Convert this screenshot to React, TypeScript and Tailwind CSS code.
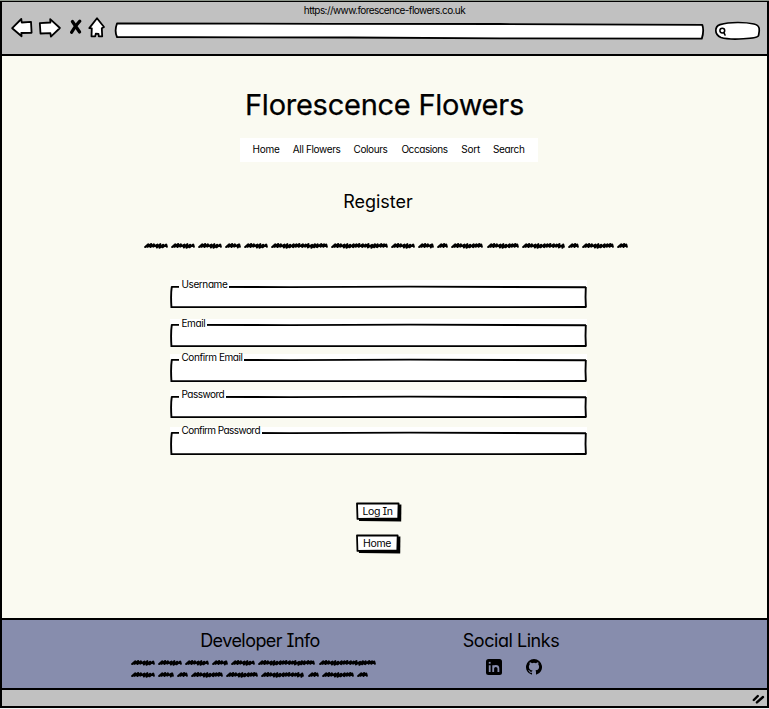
import React from "react";

const nav = [
  { label: "Home", cls: "w-[27px] tracking-[-0.25px]" },
  { label: "All Flowers", cls: "w-[47.5px] tracking-[-0.35px]" },
  { label: "Colours", cls: "w-[34.5px] tracking-[-0.4px]" },
  { label: "Occasions", cls: "w-[46.5px] tracking-[-0.42px]" },
  { label: "Sort", cls: "w-[18.5px] tracking-[-0.2px]" },
  { label: "Search", cls: "w-[33px] tracking-[-0.35px]" },
];

const fields = [
  { label: "Username", mt: "mt-0", text: "h-[9px] leading-[9px] tracking-[-0.4px]", rule: 7 },
  { label: "Email", mt: "mt-[11px]", text: "h-[9px] leading-[9px] tracking-[-0.4px]", rule: 6 },
  { label: "Confirm Email", mt: "mt-[7px]", text: "h-[8px] leading-[7px] tracking-[-0.43px]", rule: 6 },
  { label: "Password", mt: "mt-[8px]", text: "h-[9px] leading-[9px] tracking-[-0.5px]", rule: 7 },
  { label: "Confirm Password", mt: "mt-[9px]", text: "h-[8px] leading-[7px] tracking-[-0.57px]", rule: 6 },
];

const intro = [24, 24, 24, 16, 24, 57, 57, 24, 16, 11, 32, 32, 43, 11, 32, 11];
const devTop = [24, 24, 24, 16, 24, 57, 57];
const devBottom = [24, 16, 11, 32, 32, 43, 11, 32, 11];

const peaks = [2.4, 2, 2.3, 2.6, 2.2, 2.8, 2.3];
const dips = [4.8, 5, 4.6, 5.4, 5.8, 5.3, 5.1, 4.7];

function Scribble({ width }: { width: number }) {
  let d = "M1.2 5";
  let i = 0;
  for (let x = 1.2; x < width - 4.5; x += i % 3 === 0 ? 3.6 : 2.8) {
    d += ` L${x + 3.1} ${peaks[i % 7]} L${x + 2.4} ${dips[i % 8]}`;
    i++;
  }
  d += ` L${width - 1.8} 2.5 L${width - 1.2} 4.8`;
  return (
    <svg width={width} height="8" viewBox={`0 0 ${width} 8`} fill="none" className="shrink-0">
      <path d={d} stroke="#000" strokeWidth="2.1" strokeLinecap="round" strokeLinejoin="round" />
      <path d={`M1 4.6 Q${width / 2} 3.8 ${width - 1} 4.2`} stroke="#000" strokeWidth="1.4" />
    </svg>
  );
}

function ScribbleLine({ words }: { words: number[] }) {
  return (
    <div className="flex h-2 gap-[3.1px]">
      {words.map((w, i) => (
        <Scribble key={i} width={w} />
      ))}
    </div>
  );
}

function Field({ label, mt, text, rule }: { label: string; mt: string; text: string; rule: number }) {
  return (
    <label className={`relative block h-7 w-[417px] bg-white ${mt}`}>
      <svg className="absolute inset-0" width="417" height="28" fill="none" stroke="#000">
        <path d={`M1.2 ${rule - 0.1} L120 ${rule + 0.1} L240 ${rule - 0.4} L416 ${rule + 0.3}`} strokeWidth="1.9" />
        <path d={`M1.8 ${rule - 0.3} Q0.6 14 1.4 27 L200 27.3 L416 27`} strokeWidth="1.9" />
        <path d={`M415.8 ${rule} Q415.2 17 415.9 27.6`} strokeWidth="1.9" />
      </svg>
      <span className={`relative ml-[9px] block w-max bg-white pr-[2px] pl-[2.5px] text-[10px] ${text}`}>{label}</span>
    </label>
  );
}

function SketchButton({ label, cls }: { label: string; cls: string }) {
  return (
    <button className={`relative flex h-5 items-center justify-center pr-[2px] text-[10.5px] leading-none tracking-[-0.4px] ${cls}`}>
      <svg className="absolute inset-0 h-full w-full" viewBox="0 0 46 20" preserveAspectRatio="none">
        <path d="M3 3 L45.4 2.5 L45.2 19.4 L3 19 Z" />
        <path d="M1 1.3 L42.6 1.5 L42.2 16.5 L1.5 16.9 Z" fill="#fff" stroke="#000" strokeWidth="1.8" strokeLinejoin="round" />
      </svg>
      <span className="relative">{label}</span>
    </button>
  );
}

function Toolbar() {
  return (
    <header className="flex h-[54px] shrink-0 flex-col border-b-2 border-black bg-[#c1c1c1]">
      <div className="h-3 pt-px text-center text-[10px] leading-[14px] tracking-[-0.57px]">https://www.forescence-flowers.co.uk</div>
      <div className="flex h-[30px] items-start pl-[9px]">
        <svg width="97" height="28" viewBox="11 14 97 28" fill="#fff" stroke="#000" strokeWidth="1.8" strokeLinejoin="round" strokeLinecap="round">
          <path d="M12.2 28.2 L21.3 19 L21.7 22.5 L31 21.8 L31.6 32.8 L21.3 33 L21.6 36.3 Z" />
          <path d="M39.8 23.1 L50.4 22.5 L50.2 19.1 L59.9 28 L50.9 36.6 L50.4 33.1 L40.5 33.5 Z" />
          <path d="M72.4 21.5 L79.6 32 M79.8 21.2 Q75 26 71.6 32.3" strokeWidth="3.2" fill="none" />
          <path d="M97 18.2 L104 27 L101.8 28.2 L102.2 36.4 L98.8 36.4 L98.5 33.8 L95.8 33.6 L95.2 36.4 L91.5 36.3 L91.8 28.3 L89.3 28.1 Z" />
        </svg>
        <svg className="mt-[2px] ml-[5px]" width="592" height="24" viewBox="113 16 592 24" fill="#fff" stroke="#000" strokeWidth="1.8" strokeLinejoin="round">
          <path d="M117 23.5 L330 23.8 L500 24 L702.3 24.8 Q704.3 31 701.8 38.6 L500 38.4 L350 37.5 L117 37 Q114.2 31 117 23.5 Z" />
        </svg>
        <svg className="mt-[2px] ml-[9px]" width="47" height="26" viewBox="714 16 47 26" fill="#fff" stroke="#000" strokeWidth="1.7" strokeLinecap="round">
          <path d="M720 24.6 C730 21.8 745 22 754 24 C761 25.5 759.4 31 758.5 35.6 C758 38.5 731 40.5 721 37.5 C714 34.5 714.5 26.5 720 24.6 Z" />
          <circle cx="722.3" cy="30.6" r="2.4" strokeWidth="1.5" />
          <path d="M724 32.8 L725 35" strokeWidth="1.6" />
        </svg>
      </div>
    </header>
  );
}

export default function App() {
  return (
    <div className="h-[709px] w-[769px] bg-[#f2f2f2] font-[Inter,'Open_Sans',sans-serif] text-black [font-feature-settings:'cv11','cv08']">
      <div className="h-px bg-[#8d968b]" />
      <div className="flex h-[707px] w-[769px] flex-col border-t border-r-2 border-b-2 border-l-2 border-black bg-[#fafaf1]">
        <Toolbar />
        <main className="flex h-[562px] shrink-0 flex-col items-center">
          <h1 className="mt-[29px] h-10 text-[29px] leading-10 tracking-[-0.25px] whitespace-nowrap [-webkit-text-stroke:0.25px_#000]">Florescence Flowers</h1>
          <nav className="mt-[13px] ml-[8px] flex h-6 w-[298px] items-center gap-[13.3px] bg-white pl-[13px] text-[10px]">
            {nav.map((n) => (
              <a key={n.label} className={`whitespace-nowrap leading-[22px] -mt-[2px] ${n.cls}`}>{n.label}</a>
            ))}
          </nav>
          <h2 className="mt-[26px] mr-[13px] h-7 text-[18px] leading-7">Register</h2>
          <div className="mt-[26px] ml-[3px] h-2 w-[485px]">
            <ScribbleLine words={intro} />
          </div>
          <form className="mt-[30px] mr-[12px] flex flex-col">
            {fields.map((f) => (
              <Field key={f.label} {...f} />
            ))}
          </form>
          <div className="mt-[47px] mr-[12px] flex w-[46px] flex-col gap-3">
            <SketchButton label="Log In" cls="w-[46px]" />
            <SketchButton label="Home" cls="w-[45px]" />
          </div>
        </main>
        <footer className="flex h-[72px] shrink-0 border-y-2 border-black bg-[#878dad]">
          <section className="ml-[129px] w-[258px]">
            <h2 className="mt-[7px] h-7 text-center text-[18px] leading-7 tracking-[-0.55px]">Developer Info</h2>
            <div className="mt-[4px] flex flex-col gap-1">
              <ScribbleLine words={devTop} />
              <ScribbleLine words={devBottom} />
            </div>
          </section>
          <section className="ml-[59px] flex w-[126px] flex-col items-center">
            <h2 className="mt-[7px] h-7 text-[18px] leading-7 tracking-[-0.45px] whitespace-nowrap">Social Links</h2>
            <div className="mt-[4px] ml-[5px] flex gap-6">
              <svg width="16" height="16" viewBox="0 0 16 16">
                <rect width="16" height="16" rx="2.5" />
                <g fill="none" stroke="#878dad" strokeWidth="1.8">
                  <path d="M3.7 6.2 V13 M7.2 13 V6.2 M7.2 9.5 Q7.2 7 9.8 7 Q12.4 7 12.4 9.5 V13" />
                  <path d="M2.8 3.8 H4.6" />
                </g>
              </svg>
              <svg width="16" height="16" viewBox="0 0 16 16">
                <path d="M8 0a8 8 0 0 0-2.53 15.59c.4.07.55-.17.55-.38v-1.49c-2.23.48-2.7-.95-2.7-.95-.36-.92-.89-1.17-.89-1.17-.73-.5.05-.49.05-.49.81.06 1.23.83 1.23.83.72 1.23 1.87.87 2.33.66.07-.52.28-.87.5-1.07-1.77-.2-3.64-.89-3.64-3.95 0-.87.31-1.59.82-2.15-.08-.2-.36-1.02.08-2.12 0 0 .67-.21 2.2.82a7.7 7.7 0 0 1 4 0c1.53-1.04 2.2-.82 2.2-.82.44 1.1.16 1.92.08 2.12.51.56.82 1.27.82 2.15 0 3.07-1.87 3.75-3.65 3.95.29.25.54.73.54 1.48v2.2c0 .21.15.46.55.38A8 8 0 0 0 8 0Z" />
              </svg>
            </div>
          </section>
        </footer>
        <div className="flex flex-1 items-center justify-end bg-[#c1c1c1] pr-[2px]">
          <svg width="13" height="12" viewBox="0 0 13 12" fill="none" stroke="#000" strokeWidth="2.4" strokeLinecap="round">
            <path d="M1.8 8 L5.8 4 M4.9 10.4 L11 5" />
          </svg>
        </div>
      </div>
    </div>
  );
}
